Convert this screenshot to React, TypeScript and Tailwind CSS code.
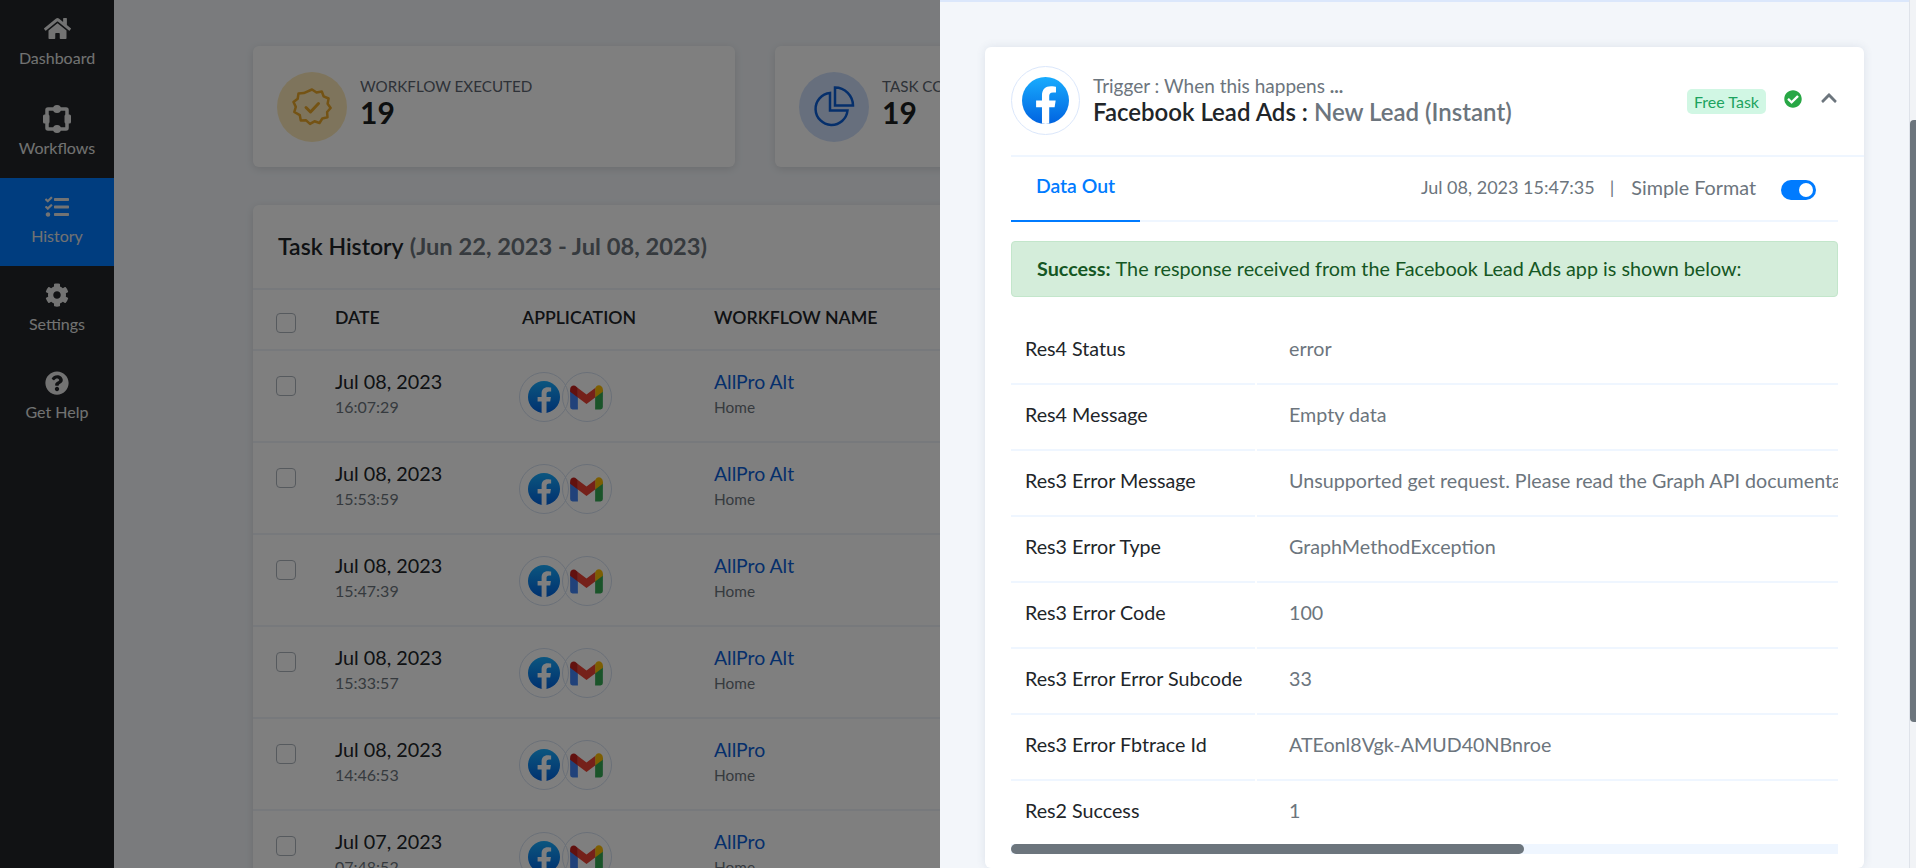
import React from "react";
import { FaHome, FaTasks, FaCog, FaQuestionCircle, FaCheckCircle, FaChevronUp } from "react-icons/fa";

const FONT = "font-['Lato','Noto_Sans',sans-serif]";

function FbLogo({ size, id }: { size: number; id: string }) {
  return (
    <svg width={size} height={size} viewBox="0 0 48 48" className="shrink-0">
      <defs>
        <linearGradient id={id} x1="0" y1="0" x2="0" y2="1">
          <stop offset="0" stopColor="#18acfe" />
          <stop offset="1" stopColor="#0163e0" />
        </linearGradient>
      </defs>
      <circle cx="24" cy="24" r="24" fill={`url(#${id})`} />
      <path
        d="M33.3 30.9l1.1-6.9h-6.6v-4.5c0-1.9.9-3.7 3.9-3.7h3v-5.9s-2.7-.5-5.3-.5c-5.4 0-9 3.300-9 9.200V24h-6v6.900h6v16.700a24 24 0 0 0 7.400 0V30.900z"
        fill="#fff"
      />
    </svg>
  );
}

function GmailLogo() {
  return (
    <svg width="33" height="25" viewBox="0 0 34 26">
      <path d="M0 5v18a2.500 2.500 0 0 0 2.500 2.500H8V12.500z" fill="#4285f4" />
      <path d="M26 12.500V25.500h5.500A2.500 2.500 0 0 0 34 23V5z" fill="#34a853" />
      <path d="M26 3v10l8-6V4.500C34 1 30 -1 27.500 1z" fill="#fbbc04" />
      <path d="M8 13V3l9 6.800L26 3v10l-9 6.800z" fill="#ea4335" />
      <path d="M0 4.500V7l8 6V3L6.500 1.800C4 -1 0 1 0 4.500z" fill="#c5221f" />
    </svg>
  );
}

function WorkflowIcon() {
  return (
    <svg width="28" height="28" viewBox="0 0 28 28" fill="#e6e6e6">
      <rect x="4" y="4" width="20" height="20" rx="1" fill="none" stroke="#e6e6e6" strokeWidth="3.500" />
      <circle cx="14" cy="4" r="4" />
      <circle cx="14" cy="24" r="4" />
      <rect x="0" y="9.500" width="6.500" height="9" rx="1.500" />
      <rect x="21.500" y="9.500" width="6.500" height="9" rx="1.500" />
    </svg>
  );
}

function NavItem({ icon, label, active, first }: { icon: React.ReactNode; label: string; active?: boolean; first?: boolean }) {
  return (
    <div
      className={`flex flex-col items-center justify-center gap-[5px] text-[16px] leading-[20px] text-[#e4e4e4] ${
        first ? "h-[90px] pb-[8px]" : "h-[88px] pb-[5px]"
      } ${active ? "bg-[#007bff]" : ""}`}
    >
      <div className="flex h-[28px] items-center justify-center">{icon}</div>
      <span>{label}</span>
    </div>
  );
}

function StatCard({ tint, icon, label }: { tint: string; icon: React.ReactNode; label: string }) {
  return (
    <div className="flex h-[121px] w-[482px] shrink-0 items-center gap-[13px] rounded-md bg-white pl-[24px] shadow-[0_2px_8px_rgba(0,0,0,0.12)]">
      <div className={`flex h-[70px] w-[70px] items-center justify-center rounded-full ${tint}`}>{icon}</div>
      <div className="flex flex-col pb-[9px]">
        <span className="text-[15.2px] leading-[20px] text-[#5c6570]">{label}</span>
        <span className="text-[30px] font-bold leading-[32px] text-[#1b1e21]">19</span>
      </div>
    </div>
  );
}

const rows = [
  ["Jul 08, 2023", "16:07:29", "AllPro Alt"],
  ["Jul 08, 2023", "15:53:59", "AllPro Alt"],
  ["Jul 08, 2023", "15:47:39", "AllPro Alt"],
  ["Jul 08, 2023", "15:33:57", "AllPro Alt"],
  ["Jul 08, 2023", "14:46:53", "AllPro"],
  ["Jul 07, 2023", "07:48:52", "AllPro"],
];

const data = [
  ["Res4 Status", "error"],
  ["Res4 Message", "Empty data"],
  ["Res3 Error Message", "Unsupported get request. Please read the Graph API documentation at https://developers.facebook.com/docs/graph-api"],
  ["Res3 Error Type", "GraphMethodException"],
  ["Res3 Error Code", "100"],
  ["Res3 Error Error Subcode", "33"],
  ["Res3 Error Fbtrace Id", "ATEonl8Vgk-AMUD40NBnroe"],
  ["Res2 Success", "1"],
];

function AppCircles({ i }: { i: number }) {
  return (
    <div className="flex">
      <div className="flex h-[50px] w-[50px] items-center justify-center rounded-full border border-[#d5e0f0]">
        <FbLogo size={32} id={`fb-${i}`} />
      </div>
      <div className="ml-[-7px] flex h-[50px] w-[50px] items-center justify-center rounded-full border border-[#d5e0f0] pr-[2px]">
        <GmailLogo />
      </div>
    </div>
  );
}

export default function App() {
  return (
    <div className={`relative flex h-[868px] w-full overflow-hidden bg-[#f4f7fb] ${FONT}`}>
      <aside className="w-[114px] shrink-0 bg-[#222428]">
        <NavItem first icon={<FaHome size={27} color="#e6e6e6" />} label="Dashboard" />
        <NavItem icon={<WorkflowIcon />} label="Workflows" />
        <NavItem active icon={<FaTasks size={24} color="#e6e6e6" />} label="History" />
        <NavItem icon={<FaCog size={24} color="#e6e6e6" />} label="Settings" />
        <NavItem icon={<FaQuestionCircle size={24} color="#e6e6e6" />} label="Get Help" />
      </aside>

      <main className="flex min-w-0 flex-1 flex-col pl-[139px] pt-[46px]">
        <div className="flex gap-[40px]">
          <StatCard
            label="WORKFLOW EXECUTED"
            tint="bg-[#fde9b8]"
            icon={
              <svg width="40" height="38" viewBox="0 0 40 38" fill="none" stroke="#e9a628" strokeWidth="2.500" strokeLinejoin="round" strokeLinecap="round">
                <path d="M20 1.500l4.500 3 5.300-1 1.800 4.800 5 2.200-1 5.200 3 4.300-3.500 4 .4 5.300-5.200 1.200-2.800 4.500-5-1.700-4.500 2.600-3.900-3.600-5.300.1-1-5.200L2.300 24l1.500-5.100L1.500 14l4.200-3.300.8-5.300 5.300-.3z" />
                <path d="M14 19.500l4.500 4.500 8-8.500" strokeWidth="3" />
              </svg>
            }
          />
          <StatCard
            label="TASK COMPLETED"
            tint="bg-[#cfdffb]"
            icon={
              <svg width="42" height="42" viewBox="0 0 42 42" fill="none" stroke="#0b5ed7" strokeWidth="2.500">
                <path d="M17 7a16 16 0 1 0 17.500 17.500H17z" />
                <path d="M22 1.500a18 18 0 0 1 18 18H22z" />
              </svg>
            }
          />
        </div>

        <section className="mt-[38px] rounded-md bg-white shadow-[0_2px_8px_rgba(0,0,0,0.12)]">
          <div className="flex h-[85px] items-center border-b-2 border-[#eef3f9] pl-[25px] text-[23px] font-semibold">
            <span className="text-[#212529]">Task History</span>
            <span className="ml-[6px] text-[23.7px] font-bold text-[#6c757d]">(Jun 22, 2023 - Jul 08, 2023)</span>
          </div>
          <div className="flex h-[61px] items-center border-b-2 border-[#eef3f9] pb-[2px] text-[17.7px] font-semibold text-[#212529]">
            <div className="ml-[23px] mt-[23px] h-[20px] w-[20px] self-start rounded-[4px] border border-[#adb5bd] bg-white" />
            <div className="ml-[39px] w-[187px]">DATE</div>
            <div className="w-[192px]">APPLICATION</div>
            <div>WORKFLOW NAME</div>
          </div>
          {rows.map((r, i) => (
            <div key={i} className="flex h-[92px] items-start border-b-2 border-[#eef3f9]">
              <div className="ml-[23px] mt-[25px] h-[20px] w-[20px] rounded-[4px] border border-[#adb5bd] bg-white" />
              <div className="ml-[39px] mt-[18px] w-[184px]">
                <div className="text-[19.8px] leading-[24px] text-[#212529]">{r[0]}</div>
                <div className="mt-[4px] text-[16px] leading-[20px] text-[#6c757d]">{r[1]}</div>
              </div>
              <div className="mt-[21px] w-[195px]">
                <AppCircles i={i} />
              </div>
              <div className="mt-[19px]">
                <div className="text-[19.4px] leading-[24px] text-[#0b5ed7]">{r[2]}</div>
                <div className="mt-[3px] text-[15.4px] leading-[20px] text-[#6c757d]">Home</div>
              </div>
            </div>
          ))}
        </section>
      </main>

      <div className="absolute inset-0 bg-black/50" />

      <div className="absolute bottom-0 right-0 top-0 flex w-[976px] flex-col overflow-hidden border-t-2 border-t-[#dbe7fb] bg-[#f3f6fa] pl-[45px] pr-[52px] pt-[45px]">
        <div className="h-[900px] rounded-md bg-white pl-[26px] shadow-[0_0_10px_rgba(60,80,120,0.12)]">
          <div className="flex h-[110px] items-start border-b-2 border-[#eff6ff] pr-[26px] pt-[19px]">
            <div className="flex h-[69px] w-[69px] shrink-0 items-center justify-center rounded-full border border-[#dbe7fb]">
              <FbLogo size={47} id="fb-main" />
            </div>
            <div className="ml-[13px] pt-[8px]">
              <div className="text-[19px] leading-[24px] text-[#6c757d]">
                Trigger : When this happens <span className="font-bold">...</span>
              </div>
              <div className="text-[24px] font-semibold leading-[28px] text-[#212529]">
                Facebook Lead Ads : <span className="text-[#6c757d]">New Lead (Instant)</span>
              </div>
            </div>
            <div className="ml-auto mt-[23px] flex h-[25px] w-[79px] items-center justify-center rounded-[5px] bg-[#d1f7e4] text-[16px] text-[#1da35f]">
              Free Task
            </div>
            <FaCheckCircle size={18} color="#28a745" className="ml-[18px] mt-[24px]" />
            <FaChevronUp size={18} color="#6c757d" className="ml-[18px] mt-[23px]" />
          </div>

          <div className="mr-[26px] flex h-[65px] items-start border-b-2 border-[#eff6ff]">
            <div className="flex h-[65px] w-[129px] items-center justify-center border-b-2 border-[#007bff] pb-[5px] text-[19.4px] font-semibold text-[#007bff]">
              Data Out
            </div>
            <div className="ml-auto mt-[18px] flex items-center leading-[24px] text-[#6c757d]">
              <span className="text-[18px]">Jul 08, 2023 15:47:35</span>
              <span className="ml-[15px] mr-[17px] text-[18.2px]">|</span>
              <span className="text-[19.8px]">Simple Format</span>
            </div>
            <div className="ml-[25px] mr-[22px] mt-[23px] flex h-[20px] w-[35px] items-center justify-end rounded-full bg-[#007bff] pr-[3px]">
              <div className="h-[14px] w-[14px] rounded-full bg-white" />
            </div>
          </div>

          <div className="mr-[26px] mt-[19px] flex h-[56px] items-center rounded-[4px] border border-[#c3e6cb] bg-[#d4edda] pl-[25px] text-[19.8px] text-[#155724]">
            <span className="font-bold">Success:</span>
            <span className="ml-[5px]">The response received from the Facebook Lead Ads app is shown below:</span>
          </div>

          <div className="mr-[26px] mt-[22px]">
            {data.map(([k, v], i) => {
              const last = i === data.length - 1;
              return (
                <div key={k} className={`flex gap-[2px] ${last ? "h-[63px]" : "h-[66px]"}`}>
                  <div className={`flex w-[244px] items-center pl-[14px] text-[19.7px] text-[#212529] ${last ? "pb-[3px]" : "border-b-2 border-[#eff6ff] pb-[4px]"}`}>
                    {k}
                  </div>
                  <div className={`flex flex-1 items-center overflow-hidden whitespace-nowrap pl-[32px] text-[19.7px] text-[#6c757d] ${last ? "pb-[3px]" : "border-b-2 border-[#eff6ff] pb-[4px]"}`}>
                    {v}
                  </div>
                </div>
              );
            })}
            <div className="h-[10px] bg-[#eff6ff]">
              <div className="h-full w-[513px] rounded-full bg-[#6c757d]" />
            </div>
          </div>
        </div>
      </div>

      <div className="absolute bottom-0 right-0 top-0 w-[7px] border-l border-[#dfe3ea] bg-[#f1f3f6]">
        <div className="mt-[120px] h-[602px] rounded-l-[4px] bg-[#6c757d]" />
      </div>
    </div>
  );
}
